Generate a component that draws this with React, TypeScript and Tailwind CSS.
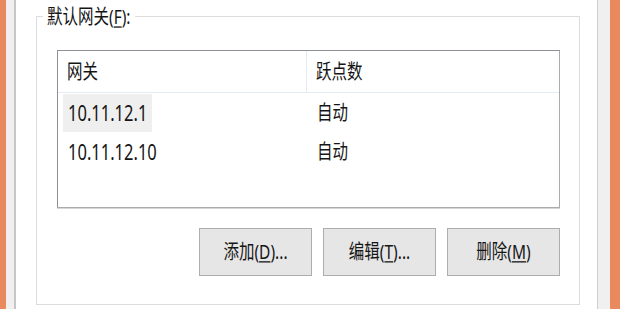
import React from "react";

const font = "font-['Noto_Sans','Noto_Sans_CJK_SC',sans-serif]";

function T({ children }: { children: React.ReactNode }) {
  // the screenshot is stretched vertically, so the glyphs are too
  return <span className="inline-block scale-y-[1.3]">{children}</span>;
}

const gateways = [
  { address: "10.11.12.1", metric: "自动", selected: true },
  { address: "10.11.12.10", metric: "自动", selected: false },
];

function DialogButton({ label, hotkey, dots }: { label: string; hotkey: string; dots?: boolean }) {
  return (
    <button className="flex h-[48px] w-[113px] items-center justify-center border border-[#adadad] bg-[#e6e6e6] text-[15.5px] text-[#151515]">
      <T>
        {label}(<span className="underline underline-offset-2">{hotkey}</span>){dots ? "..." : ""}
      </T>
    </button>
  );
}

export default function App() {
  return (
    <div className={`flex h-[309px] w-[620px] overflow-hidden bg-white ${font}`}>
      <div className="w-[6px] bg-[#e98a5e]" />
      <div className="w-[8px] bg-[#f0f0f0]" />
      <div className="w-[2px] bg-[#c6c6c6]" />

      <div className="flex-1 pl-[20px] pt-[6px]">
        <fieldset className="h-[299px] w-[544px] border border-[#dcdcdc]">
          <legend className="ml-[6px] px-[4px] text-[15.5px] leading-[20px] text-[#151515]">
            <T>
              默认网关(<span className="underline underline-offset-2">F</span>):
            </T>
          </legend>

          <div className="ml-[20px] mt-[24px] h-[158px] w-[503px] border border-[#8d9097] border-b-[#a9abaf] border-r-[#a9abaf] bg-white text-[15.5px] text-[#151515] shadow-[0_1px_0_#d6d6d6]">
            <div className="flex h-[42px] border-b border-[#e3ebf4]">
              <div className="flex w-[249px] items-center border-r border-[#e3ebf4] pl-[9px]">
                <T>网关</T>
              </div>
              <div className="flex flex-1 items-center pl-[9px]">
                <T>跃点数</T>
              </div>
            </div>
            {gateways.map((g) => (
              <div key={g.address} className="flex h-[39px]">
                <div className="flex w-[249px] items-stretch pl-[5px] pt-[1px]">
                  <span className={`flex items-center px-[5px] text-[16.5px] ${g.selected ? "bg-[#efefef]" : ""}`}>
                    <T>{g.address}</T>
                  </span>
                </div>
                <div className="flex flex-1 items-center pl-[10px]">
                  <T>{g.metric}</T>
                </div>
              </div>
            ))}
          </div>

          <div className="ml-[20px] mt-[20px] flex w-[503px] justify-end gap-[11px]">
            <DialogButton label="添加" hotkey="D" dots />
            <DialogButton label="编辑" hotkey="T" dots />
            <DialogButton label="删除" hotkey="M" />
          </div>
        </fieldset>
      </div>

      <div className="w-[1px] bg-[#cfcfcf]" />
      <div className="w-[12px] bg-[#f0f0f0]" />
      <div className="w-[10px] bg-[#e98a5e]" />
    </div>
  );
}
